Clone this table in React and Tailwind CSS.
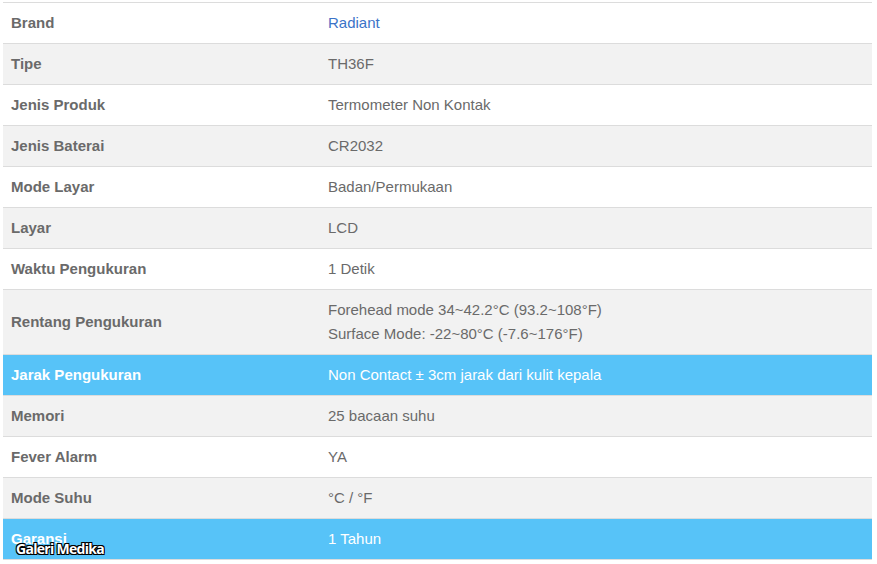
import React from 'react'

const rows = [
  { label: 'Brand', value: 'Radiant', link: true },
  { label: 'Tipe', value: 'TH36F' },
  { label: 'Jenis Produk', value: 'Termometer Non Kontak' },
  { label: 'Jenis Baterai', value: 'CR2032' },
  { label: 'Mode Layar', value: 'Badan/Permukaan' },
  { label: 'Layar', value: 'LCD' },
  { label: 'Waktu Pengukuran', value: '1 Detik' },
  { label: 'Rentang Pengukuran', value: ['Forehead mode 34~42.2°C (93.2~108°F)', 'Surface Mode: -22~80°C (-7.6~176°F)'] },
  { label: 'Jarak Pengukuran', value: 'Non Contact ± 3cm jarak dari kulit kepala', hl: true },
  { label: 'Memori', value: '25 bacaan suhu' },
  { label: 'Fever Alarm', value: 'YA' },
  { label: 'Mode Suhu', value: '°C / °F' },
  { label: 'Garansi', value: '1 Tahun', hl: true },
]

export default function App() {
  return (
    <div className="relative w-[877px] h-[564px] bg-white pt-[2px] px-[3px] font-['Liberation_Sans',Arial,sans-serif] text-[15px] leading-6">
      <table className="w-[869px] border-collapse">
        <tbody>
          {rows.map((r, i) => {
            const bg = r.hl ? 'bg-[#57c3f8]' : i % 2 === 0 ? 'bg-white' : 'bg-[#f2f2f2]'
            const txt = r.hl ? 'text-white' : 'text-[#6a6a6a]'
            return (
              <tr key={r.label} className={`${bg} border-t border-b border-[#dcdcdc]`}>
                <td className={`w-[317px] px-2 py-2 font-bold align-middle ${txt}`}>{r.label}</td>
                <td className={`px-2 py-2 align-middle ${r.link ? 'text-[#3b73c8]' : txt}`}>
                  {Array.isArray(r.value) ? r.value.map(v => <div key={v}>{v}</div>) : r.value}
                </td>
              </tr>
            )
          })}
        </tbody>
      </table>
      {/* watermark */}
      <div className="absolute left-[16px] top-[541px] text-[14px] leading-4 font-bold text-white font-['Open_Sans',sans-serif] [text-shadow:-1px_-1px_0_#000,1px_-1px_0_#000,-1px_1px_0_#000,1px_1px_0_#000,0_1px_0_#000,0_-1px_0_#000] tracking-[-0.7px]">
        Galeri Medika
      </div>
    </div>
  )
}
